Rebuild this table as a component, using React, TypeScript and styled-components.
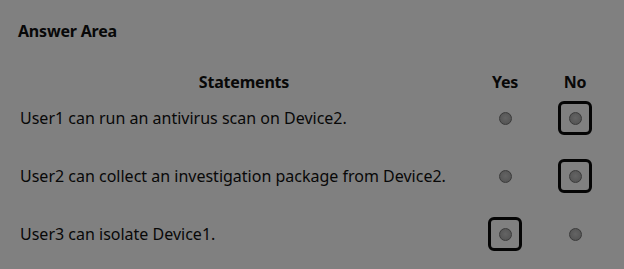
import React from 'react';
import styled, {createGlobalStyle} from 'styled-components';

type Answer = 'yes' | 'no';

type Statement = {
    text: string;
    answer: Answer;
}

const statements: Statement[] = [
    {text: 'User1 can run an antivirus scan on Device2.', answer: 'no'},
    {text: 'User2 can collect an investigation package from Device2.', answer: 'no'},
    {text: 'User3 can isolate Device1.', answer: 'yes'},
];

const choices: Answer[] = ['yes', 'no'];

const GlobalStyle = createGlobalStyle`
    html, body {
        margin: 0;
        padding: 0;
        background: #808080;
    }
    body {
        font-family: 'Noto Sans', 'Open Sans', sans-serif;
        color: #080808;
    }
`;

const AnswerArea = styled.div`
    width: 624px;
    height: 269px;
    box-sizing: border-box;
    padding: 20px 0 0 18px;
    background: #808080;
`;

const Title = styled.h1`
    margin: 0;
    font-size: 16px;
    font-weight: 700;
    line-height: 22px;
    letter-spacing: -0.2px;
`;

// header row is kept short so the first statement sits close under it
const Table = styled.div`
    display: grid;
    grid-template-columns: 402px 50px 70px 70px;
    grid-template-rows: 14px;
    grid-auto-rows: 58px;
    margin-top: 33px;
`;

const HeaderCell = styled.div<{$wide?: boolean}>`
    display: flex;
    align-items: center;
    justify-content: center;
    grid-column: ${(p) => (p.$wide ? 'span 2' : 'auto')};
    font-size: 16px;
    font-weight: 700;
    line-height: 22px;
    letter-spacing: -0.2px;
`;

const StatementCell = styled.div`
    display: flex;
    align-items: center;
    grid-column: span 2;
    padding-left: 2px;
    font-size: 16px;
    line-height: 22px;
`;

const ChoiceCell = styled.div`
    display: flex;
    align-items: center;
    justify-content: center;
`;

const Selection = styled.div<{$selected: boolean}>`
    display: flex;
    align-items: center;
    justify-content: center;
    width: 34px;
    height: 34px;
    box-sizing: border-box;
    border: 3px solid ${(p) => (p.$selected ? '#050505' : 'transparent')};
    border-radius: 6px;
`;

const Radio = styled.span`
    width: 13px;
    height: 13px;
    box-sizing: border-box;
    border-radius: 50%;
    border: 1.5px solid #3a3a3a;
    background: radial-gradient(circle at 50% 45%, #646464 0%, #555555 75%);
`;

const App = (): JSX.Element => {
    return (
        <AnswerArea>
            <GlobalStyle/>
            <Title>{'Answer Area'}</Title>
            <Table>
                <HeaderCell $wide={true}>{'Statements'}</HeaderCell>
                <HeaderCell>{'Yes'}</HeaderCell>
                <HeaderCell>{'No'}</HeaderCell>
                {statements.map((statement) => (
                    <React.Fragment key={statement.text}>
                        <StatementCell>{statement.text}</StatementCell>
                        {choices.map((choice) => (
                            <ChoiceCell key={choice}>
                                <Selection $selected={statement.answer === choice}>
                                    <Radio/>
                                </Selection>
                            </ChoiceCell>
                        ))}
                    </React.Fragment>
                ))}
            </Table>
        </AnswerArea>
    );
};

export default App;
